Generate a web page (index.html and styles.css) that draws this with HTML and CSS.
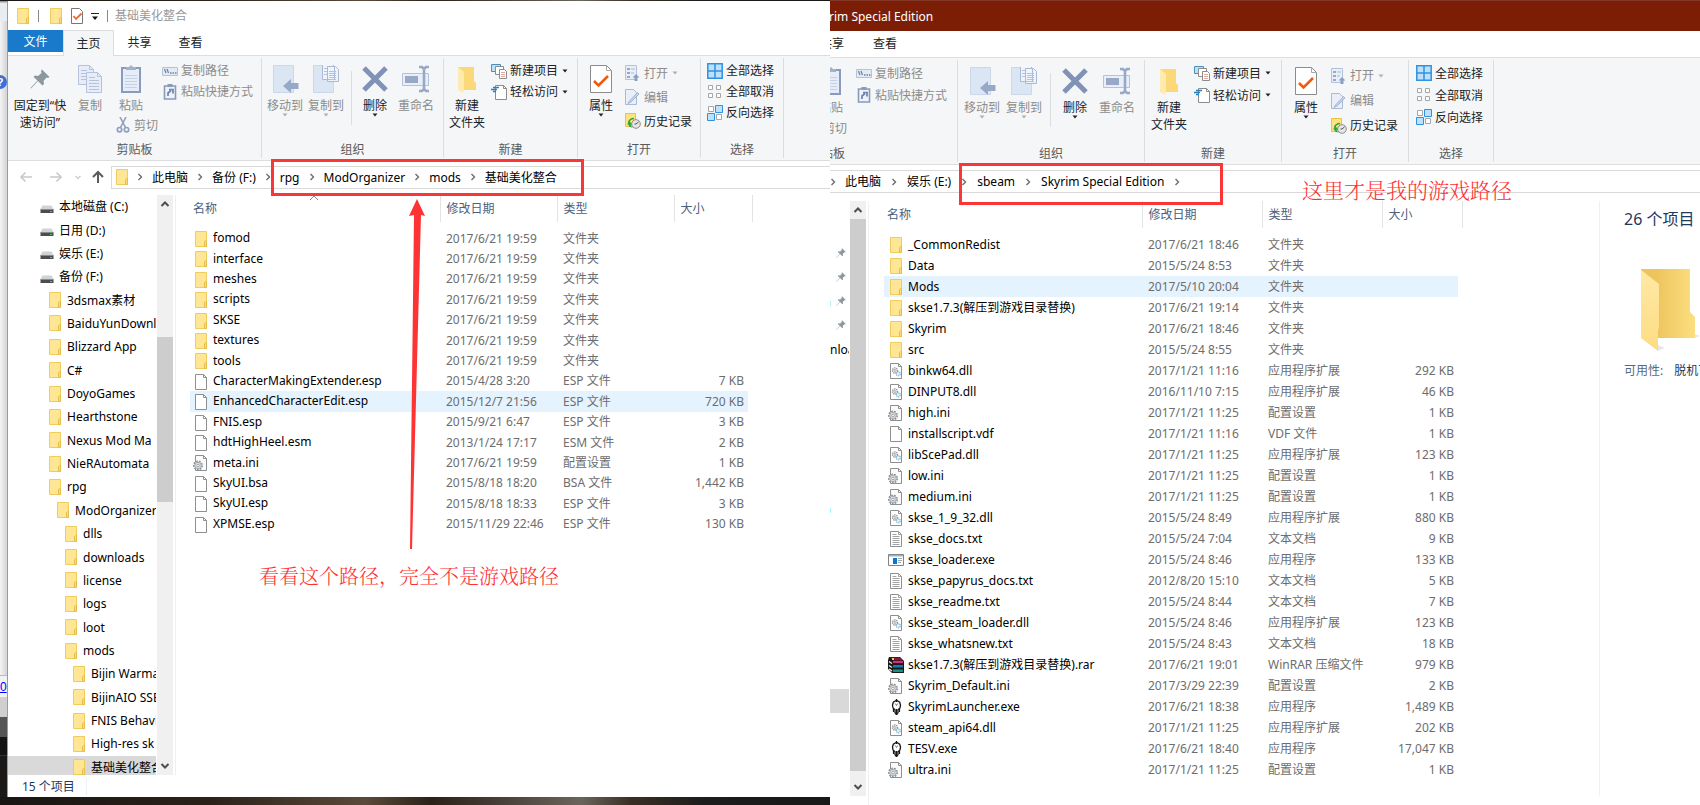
FILE: index.html
```html
<!DOCTYPE html>
<html lang="zh-CN">
<head>
<meta charset="utf-8">
<title>基础美化整合</title>
<link rel="stylesheet" href="styles.css">
</head>
<body>
<svg class="sprite" aria-hidden="true">
  <symbol id="folder" viewBox="0 0 16 16"><path d="M2.5.5h11v15h-11z" fill="#ffe694" stroke="#f0cc5c"/><path d="M11.5 15.5v-5l1-1h1v6z" fill="#ffdc72" stroke="#e6bd48"/></symbol>
  <symbol id="file" viewBox="0 0 16 16"><path d="M2.500.5h8l3 3v12h-11z" fill="#fff" stroke="#8f8f8f"/><path d="M10.500.5v3h3" fill="none" stroke="#8f8f8f"/></symbol>
  <symbol id="gearfile" viewBox="0 0 16 16"><path d="M2.500.5h8l3 3v12h-11z" fill="#fafafa" stroke="#8f8f8f"/><path d="M10.500.5v3h3" fill="none" stroke="#8f8f8f"/><circle cx="5" cy="10.500" r="4.200" fill="#e4e7ea" stroke="#8b9095" stroke-width="1.600" stroke-dasharray="1.700 1.200"/><circle cx="5" cy="10.500" r="3.200" fill="#dde1e4" stroke="#9aa0a5" stroke-width=".8"/><circle cx="5" cy="10.500" r="1.300" fill="#fff" stroke="#8b9095" stroke-width=".8"/></symbol>
  <symbol id="dll" viewBox="0 0 16 16"><path d="M2.500.5h8l3 3v12h-11z" fill="#fff" stroke="#8f8f8f"/><path d="M10.500.5v3h3" fill="none" stroke="#8f8f8f"/><circle cx="7" cy="7.500" r="2.600" fill="#eef1f3" stroke="#8b9095" stroke-width="1.200" stroke-dasharray="1.400 .8"/><circle cx="7" cy="7.500" r="1" fill="#fff" stroke="#8b9095" stroke-width=".7"/><circle cx="10.300" cy="10.800" r="2" fill="#e5f2f9" stroke="#7fb2cf" stroke-width="1.200" stroke-dasharray="1.200 .7"/></symbol>
  <symbol id="txt" viewBox="0 0 16 16"><path d="M2.500.5h8l3 3v12h-11z" fill="#fff" stroke="#8f8f8f"/><path d="M10.500.5v3h3M4.500 3.500h4M4.500 5.500h7M4.500 7.500h7M4.500 9.500h7M4.500 11.500h7M4.500 13.500h7" fill="none" stroke="#a2a2a2"/></symbol>
  <symbol id="exe" viewBox="0 0 16 16"><path d="M.5 2.500h15v11h-15z" fill="#fff" stroke="#7d858c"/><path d="M1 3h14v1.500H1z" fill="#a9b0b6"/><path d="M5 6h4v6H5z" fill="#0078d7"/><path d="M10 6.500h4M10 8.500h4M10 10.500h3" stroke="#a2a8ad"/></symbol>
  <symbol id="rar" viewBox="0 0 16 16"><path d="M1 0h11l4 4v12H4L0 12V3z" fill="#1a1a1a"/><path d="M2 .5h10l3 3H5z" fill="#8a1540"/><path d="M5 4h10v2H5z" fill="#d0307a"/><path d="M5 8h10v2.500H5z" fill="#1f72c0"/><path d="M5 12.500h10V15H5z" fill="#12967a"/><path d="M1 4.500l3 2M1 8.500l3 2M1 12l3 2" stroke="#eee" stroke-width="1.200"/><path d="M4 1h2v2H4z" fill="#f0c73e"/></symbol>
  <symbol id="emblem" viewBox="0 0 16 16"><path d="M8.500 1.200L5.300 3.200 4.500 6l.5 3L7 10.800v3l1.500 1.700L10 13.800v-3L12 9l.5-3-.8-2.800z" fill="#fff" stroke="#161616" stroke-width="1.300"/><path d="M7.300 4.500l1.200 2 1.200-2" fill="none" stroke="#444" stroke-width=".7"/><path d="M8.500 0v3M8.500 10v6" stroke="#161616" stroke-width="1.300"/><path d="M5.500 10v3M11.500 10v3" stroke="#161616" stroke-width="1.200"/></symbol>
  <symbol id="drive" viewBox="0 0 16 16"><path d="M3.500 6.500h9l2 3.500h-13z" fill="#d0d3d5"/><path d="M1.500 10h13v4h-13z" fill="#4a4d4f"/><path d="M2 10.500h12" stroke="#898c8e"/><path d="M11 12h2v1h-2z" fill="#3bd44a"/></symbol>
  <symbol id="chev" viewBox="0 0 6 8"><path d="M1.500 1l3 3-3 3" fill="none" stroke="#6d6d6d" stroke-width="1.400"/></symbol>
  <symbol id="caret" viewBox="0 0 6 4"><path d="M.500.5h5L3 3.500z" fill="currentColor"/></symbol>
  <symbol id="up" viewBox="0 0 10 6"><path d="M1.500 5L5 1.500 8.500 5" fill="none" stroke="#4e4e4e" stroke-width="2"/></symbol>
  <symbol id="down" viewBox="0 0 10 6"><path d="M1.500 1L5 4.500 8.500 1" fill="none" stroke="#4e4e4e" stroke-width="2"/></symbol>
  <symbol id="pin" viewBox="0 0 20 20"><path d="M12 .5L19.500 8l-1.500 1-1.500-.5-3 3.500.5 3-1.500 1.500-4.500-4.500L1 19.500.5 19l7-7.500L3.500 8 5 6.500l3 .5 3.500-3L11 2z" fill="#8c979e"/></symbol>
  <symbol id="copy" viewBox="0 0 28 28"><g fill="#e6edf8" stroke="#b4c2dc"><path d="M2.500.5h11l4 4v15h-15z"/><path d="M10.500 7.500h11l4 4v16h-15z"/></g><path d="M13.500.5v4h4M21.500 7.500v4h4M5 5.500h6M5 8.500h5M5 11.500h5M5 14.500h5M13 12.500h6M13 15.500h10M13 18.500h10M13 21.500h10M13 24.500h10" fill="none" stroke="#b4c2dc"/></symbol>
  <symbol id="paste" viewBox="0 0 28 28"><path d="M5 3h18v24H5z" fill="#e6edf8" stroke="#889bbd" stroke-width="2"/><path d="M9 5V2h3l2-2 2 2h3v3z" fill="#a3b2cc"/><path d="M8 10.500h12M8 13.500h12M8 16.500h12M8 19.500h12M8 22.500h12" stroke="#c5d1e5"/></symbol>
  <symbol id="cut" viewBox="0 0 16 16"><path d="M5 0l5.500 10.500M11 0L5.500 10.500" stroke="#8f9fbd" stroke-width="1.600"/><g fill="none" stroke="#8f9fbd" stroke-width="1.700"><circle cx="4.500" cy="12.700" r="2.200"/><circle cx="11.500" cy="12.700" r="2.200"/></g></symbol>
  <symbol id="path" viewBox="0 0 16 16"><path d="M.5 4.500h15v8H.5z" fill="#e2eaf6" stroke="#b4c2dc"/><path d="M2.500 6l1.500 4M5 6l1.500 4" stroke="#6e7f9f" stroke-width="1.200"/><path d="M8 10h1.500M10.500 10H12M13 10h1.500" stroke="#6e7f9f" stroke-width="1.500"/></symbol>
  <symbol id="shortcut" viewBox="0 0 16 16"><path d="M2.500 2h11v13h-11z" fill="#eef3fa" stroke="#889bbd" stroke-width="1.600"/><path d="M5.500 0h5v3h-5z" fill="#889bbd"/><path d="M6 12V9l3-2.500M7 5.500h4v4" fill="none" stroke="#6e83aa" stroke-width="1.700"/></symbol>
  <symbol id="move" viewBox="0 0 28 28"><path d="M2.500.5h20v27h-20z" fill="#dbe6f5" stroke="#cbd8ec"/><path d="M27.500 18v6H20v4l-8-7 8-7v4z" fill="#98a9c8"/></symbol>
  <symbol id="copyto" viewBox="0 0 28 28"><path d="M1.500.5h20v27h-20z" fill="#dbe6f5" stroke="#cbd8ec"/><path d="M10.500-1.500h9l3 3v13h-12zM15.500 1.500h8l3 3v12h-11z" fill="#eff4fb" stroke="#a9b9d6"/><path d="M17 6.500h7M17 8.500h7M17 10.500h7M17 12.500h7M17 14.500h7M12 3.500h3M12 6.500h3M12 9.500h3" stroke="#b4c2dc"/></symbol>
  <symbol id="delete" viewBox="0 0 28 28"><path d="M3 3l22 22M25 3L3 25" stroke="#8093b6" stroke-width="5"/></symbol>
  <symbol id="rename" viewBox="0 0 28 28"><path d="M.5 8.500h26v12H.5z" fill="#e8eff8" stroke="#b4c2dc"/><path d="M3 11h13v7H3z" fill="#98a9c8"/><path d="M22 3v22M17 2h3l2 2 2-2h3M17 26h3l2-2 2 2h3" fill="none" stroke="#98a9c8" stroke-width="2.600"/></symbol>
  <symbol id="newfolder" viewBox="0 0 28 28"><path d="M5 2h16v14l2 2v7H5z" fill="#fbd978"/><path d="M5 2l6 5v16l-1 5-5-3z" fill="#ffebaf"/></symbol>
  <symbol id="newitem" viewBox="0 0 16 16"><path d="M.5 1.500h9v7h-9z" fill="#bfe0f4" stroke="#4b8fba"/><path d="M4.500 3.500h8v8h-8z" fill="#fff" stroke="#8c8c8c"/><path d="M8.500 6.500h5l2 2v7h-7z" fill="#fff" stroke="#8c8c8c"/><path d="M10 9.500h4M10 11.500h4M10 13.500h4" stroke="#e0a9a0"/></symbol>
  <symbol id="easy" viewBox="0 0 16 16"><path d="M4.500 1.500h8l3 3v11h-11z" fill="#fff" stroke="#8c8c8c"/><path d="M12.500 1.500v3h3" fill="none" stroke="#8c8c8c"/><path d="M2 3.500h6M0 5.500h6M2 7.500h3" stroke="#2f7fb8" stroke-width="1.500"/></symbol>
  <symbol id="props" viewBox="0 0 28 28"><path d="M3.500.5h16l5 5v22h-21z" fill="#fff" stroke="#8c8c8c"/><path d="M19.500.5v5h5" fill="none" stroke="#a8a8a8"/><path d="M7 16l4.500 4.500L21 11" fill="none" stroke="#f2590d" stroke-width="2.600"/></symbol>
  <symbol id="tick" viewBox="0 0 16 16"><path d="M2.500.5h8l3 3v12h-11z" fill="#fff" stroke="#777"/><path d="M4.500 8l2.500 3 5.500-5.500" fill="none" stroke="#f2692a" stroke-width="1.800"/></symbol>
  <symbol id="open" viewBox="0 0 16 16"><path d="M.5.500h11v14H.5z" fill="#e8eff8" stroke="#b4c2dc"/><path d="M2 3h3v2H2zM2 7h3v2H2zM2 11h3v2H2z" fill="#98a9c8"/><path d="M6 4h4M6 8h3" stroke="#a9b9d6"/><path d="M9.500 16v-3.500H7.500L11 9l3.500 3.500h-2V16z" fill="#8c9fc3"/></symbol>
  <symbol id="edit" viewBox="0 0 16 16"><path d="M.5.500h8l3 3v12H.5z" fill="#e8eff8" stroke="#a9b9d6"/><path d="M14 5L6 13l-3 1.500L4.500 12 12.500 3.500z" fill="#c6d4ea" stroke="#98a9c8" stroke-width=".8"/></symbol>
  <symbol id="history" viewBox="0 0 16 16"><path d="M.5.500h10v13H.5z" fill="#ffe37e" stroke="#e9c14d"/><circle cx="11" cy="11" r="4.300" fill="#e6e6e6" stroke="#8c8c8c"/><path d="M11 11l2.500-2M11 11H9.500" stroke="#555"/><path d="M2 11.500L4.500 8 7 11.500H5.700c0 1.500 1 2.500 2.300 3-3 0-4.500-1-4.500-3z" fill="#24a63a"/><path d="M3.500 9.500C4.500 6.500 6.500 5.500 9 5.500" fill="none" stroke="#24a63a" stroke-width="1.600"/></symbol>
  <symbol id="selall" viewBox="0 0 16 16"><path d="M.8.800h14.400v14.400H.8zM8 1v14M1 8h14" fill="#bfe0fa" stroke="#2f92e0" stroke-width="1.500"/></symbol>
  <symbol id="selnone" viewBox="0 0 16 16"><path d="M1.500 1.500h4v4h-4zM9.500 1.500h4v4h-4zM1.500 9.500h4v4h-4zM9.500 9.500h4v4h-4z" fill="#fff" stroke="#a6a6a6"/></symbol>
  <symbol id="selinv" viewBox="0 0 16 16"><path d="M1.500 1.500h5v5h-5zM9.500 9.500h5v5h-5z" fill="#fff" stroke="#a6a6a6"/><path d="M8.500.5h7v7h-7zM.5 8.500h7v7h-7z" fill="#bfe0fa" stroke="#2f92e0"/></symbol>
</svg>

<main class="desktop">
  <section class="scene scene-left">
    <div class="backdrop">
      <i class="strip strip-top"></i>
      <i class="strip strip-page"><b class="help">?</b></i>
      <i class="strip strip-link"><a href="#">0</a></i>
      <i class="strip strip-gray"></i>
      <i class="strip strip-slate"></i>
      <i class="strip strip-dark"></i>
    </div>

    <div class="window window-left">
      <header class="titlebar">
        <svg class="i16"><use href="#folder"/></svg><span class="tick-sep"></span>
        <svg class="i16 quick-folder"><use href="#folder"/></svg>
        <svg class="i16"><use href="#tick"/></svg>
        <svg class="qat" viewBox="0 0 8 8"><path d="M0 .5h8" stroke="#222"/><path d="M1 3.500h6L4 7z" fill="#111"/></svg>
        <span class="tick-sep"></span>
        <span class="title">基础美化整合</span>
      </header>
      <nav class="tabs">
        <button class="tab tab-file">文件</button>
        <button class="tab tab-on">主页</button>
        <button class="tab">共享</button>
        <button class="tab">查看</button>
      </nav>
      <div class="ribbon">
        <section class="group g-clip">
          <div class="tools">
            <button class="big big-pin"><svg class="i28 pin-icon"><use href="#pin"/></svg>固定到“快<br>速访问”</button>
            <button class="big off"><svg class="i28"><use href="#copy"/></svg>复制</button>
            <div class="paste-col">
              <button class="big off"><svg class="i28"><use href="#paste"/></svg>粘贴</button>
              <button class="small off cut"><svg class="i16"><use href="#cut"/></svg>剪切</button>
            </div>
            <div class="stack">
              <button class="small off"><svg class="i16"><use href="#path"/></svg>复制路径</button>
              <button class="small off"><svg class="i16"><use href="#shortcut"/></svg>粘贴快捷方式</button>
            </div>
          </div>
          <h2>剪贴板</h2>
        </section>
        <section class="group g-org">
          <div class="tools">
            <button class="big off"><svg class="i28"><use href="#move"/></svg>移动到<svg class="caret"><use href="#caret"/></svg></button>
            <button class="big off"><svg class="i28"><use href="#copyto"/></svg>复制到<svg class="caret"><use href="#caret"/></svg></button>
            <span class="rule"></span>
            <button class="big"><svg class="i28"><use href="#delete"/></svg>删除<svg class="caret"><use href="#caret"/></svg></button>
            <button class="big off"><svg class="i28"><use href="#rename"/></svg>重命名</button>
          </div>
          <h2>组织</h2>
        </section>
        <section class="group g-new">
          <div class="tools">
            <button class="big"><svg class="i28"><use href="#newfolder"/></svg>新建<br>文件夹</button>
            <div class="stack">
              <button class="small"><svg class="i16"><use href="#newitem"/></svg>新建项目<svg class="caret"><use href="#caret"/></svg></button>
              <button class="small"><svg class="i16"><use href="#easy"/></svg>轻松访问<svg class="caret"><use href="#caret"/></svg></button>
            </div>
          </div>
          <h2>新建</h2>
        </section>
        <section class="group g-open">
          <div class="tools">
            <button class="big"><svg class="i28"><use href="#props"/></svg>属性<svg class="caret"><use href="#caret"/></svg></button>
            <div class="stack stack-loose">
              <button class="small off"><svg class="i16"><use href="#open"/></svg>打开<svg class="caret"><use href="#caret"/></svg></button>
              <button class="small off"><svg class="i16"><use href="#edit"/></svg>编辑</button>
              <button class="small"><svg class="i16"><use href="#history"/></svg>历史记录</button>
            </div>
          </div>
          <h2>打开</h2>
        </section>
        <section class="group g-select">
          <div class="tools">
            <div class="stack">
              <button class="small"><svg class="i16"><use href="#selall"/></svg>全部选择</button>
              <button class="small"><svg class="i16"><use href="#selnone"/></svg>全部取消</button>
              <button class="small"><svg class="i16"><use href="#selinv"/></svg>反向选择</button>
            </div>
          </div>
          <h2>选择</h2>
        </section>
      </div>
      <div class="address">
        <svg class="nav-arrows" viewBox="0 0 100 16"><g fill="none" stroke-width="1.600"><path d="M24 8H13M17.500 3.500L13 8l4.500 4.500M42 8h11M48.500 3.500L53 8l-4.500 4.500" stroke="#c9c9c9"/><path d="M67.500 7l2.500 2.500L72.500 7" stroke="#c9c9c9" stroke-width="1.200"/><path d="M90 14V3M85 8l5-5 5 5" stroke="#5b5b5b" stroke-width="2"/></g></svg>
        <nav class="crumbs">
          <svg class="i16"><use href="#folder"/></svg>
          <svg class="chev"><use href="#chev"/></svg><a href="#">此电脑</a>
          <svg class="chev"><use href="#chev"/></svg><a href="#">备份 (F:)</a>
          <svg class="chev"><use href="#chev"/></svg><a href="#">rpg</a>
          <svg class="chev"><use href="#chev"/></svg><a href="#">ModOrganizer</a>
          <svg class="chev"><use href="#chev"/></svg><a href="#">mods</a>
          <svg class="chev"><use href="#chev"/></svg><a href="#">基础美化整合</a>
        </nav>
      </div>
      <div class="content">
        <div class="treebox">
          <ul class="tree">
            <li><svg class="i16"><use href="#drive"/></svg>本地磁盘 (C:)</li>
            <li><svg class="i16"><use href="#drive"/></svg>日用 (D:)</li>
            <li><svg class="i16"><use href="#drive"/></svg>娱乐 (E:)</li>
            <li><svg class="i16"><use href="#drive"/></svg>备份 (F:)</li>
            <li class="l1"><svg class="i16"><use href="#folder"/></svg>3dsmax素材</li>
            <li class="l1"><svg class="i16"><use href="#folder"/></svg>BaiduYunDownload</li>
            <li class="l1"><svg class="i16"><use href="#folder"/></svg>Blizzard App</li>
            <li class="l1"><svg class="i16"><use href="#folder"/></svg>C#</li>
            <li class="l1"><svg class="i16"><use href="#folder"/></svg>DoyoGames</li>
            <li class="l1"><svg class="i16"><use href="#folder"/></svg>Hearthstone</li>
            <li class="l1"><svg class="i16"><use href="#folder"/></svg>Nexus Mod Ma</li>
            <li class="l1"><svg class="i16"><use href="#folder"/></svg>NieRAutomata</li>
            <li class="l1"><svg class="i16"><use href="#folder"/></svg>rpg</li>
            <li class="l2"><svg class="i16"><use href="#folder"/></svg>ModOrganizer</li>
            <li class="l3"><svg class="i16"><use href="#folder"/></svg>dlls</li>
            <li class="l3"><svg class="i16"><use href="#folder"/></svg>downloads</li>
            <li class="l3"><svg class="i16"><use href="#folder"/></svg>license</li>
            <li class="l3"><svg class="i16"><use href="#folder"/></svg>logs</li>
            <li class="l3"><svg class="i16"><use href="#folder"/></svg>loot</li>
            <li class="l3"><svg class="i16"><use href="#folder"/></svg>mods</li>
            <li class="l4"><svg class="i16"><use href="#folder"/></svg>Bijin Warma</li>
            <li class="l4"><svg class="i16"><use href="#folder"/></svg>BijinAIO SSE</li>
            <li class="l4"><svg class="i16"><use href="#folder"/></svg>FNIS Behavi</li>
            <li class="l4"><svg class="i16"><use href="#folder"/></svg>High-res sk</li>
            <li class="l4 on"><svg class="i16"><use href="#folder"/></svg>基础美化整合</li>
          </ul>
        </div>
        <div class="scroll scroll-left"><svg class="arrow"><use href="#up"/></svg><i class="gap-before"></i><i class="thumb"></i><i class="gap-after"></i><svg class="arrow"><use href="#down"/></svg></div>
        <div class="listing">
          <table class="files">
            <colgroup><col class="c-name"><col class="c-date"><col class="c-type"><col class="c-size"></colgroup>
            <thead><tr><th>名称</th><th>修改日期</th><th>类型</th><th>大小</th></tr></thead>
            <tbody>
              <tr><td><svg class="i16"><use href="#folder"/></svg>fomod</td><td>2017/6/21 19:59</td><td>文件夹</td><td></td></tr>
              <tr><td><svg class="i16"><use href="#folder"/></svg>interface</td><td>2017/6/21 19:59</td><td>文件夹</td><td></td></tr>
              <tr><td><svg class="i16"><use href="#folder"/></svg>meshes</td><td>2017/6/21 19:59</td><td>文件夹</td><td></td></tr>
              <tr><td><svg class="i16"><use href="#folder"/></svg>scripts</td><td>2017/6/21 19:59</td><td>文件夹</td><td></td></tr>
              <tr><td><svg class="i16"><use href="#folder"/></svg>SKSE</td><td>2017/6/21 19:59</td><td>文件夹</td><td></td></tr>
              <tr><td><svg class="i16"><use href="#folder"/></svg>textures</td><td>2017/6/21 19:59</td><td>文件夹</td><td></td></tr>
              <tr><td><svg class="i16"><use href="#folder"/></svg>tools</td><td>2017/6/21 19:59</td><td>文件夹</td><td></td></tr>
              <tr><td><svg class="i16"><use href="#file"/></svg>CharacterMakingExtender.esp</td><td>2015/4/28 3:20</td><td>ESP 文件</td><td>7 KB</td></tr>
              <tr class="on"><td><svg class="i16"><use href="#file"/></svg>EnhancedCharacterEdit.esp</td><td>2015/12/7 21:56</td><td>ESP 文件</td><td>720 KB</td></tr>
              <tr><td><svg class="i16"><use href="#file"/></svg>FNIS.esp</td><td>2015/9/21 6:47</td><td>ESP 文件</td><td>3 KB</td></tr>
              <tr><td><svg class="i16"><use href="#file"/></svg>hdtHighHeel.esm</td><td>2013/1/24 17:17</td><td>ESM 文件</td><td>2 KB</td></tr>
              <tr><td><svg class="i16"><use href="#gearfile"/></svg>meta.ini</td><td>2017/6/21 19:59</td><td>配置设置</td><td>1 KB</td></tr>
              <tr><td><svg class="i16"><use href="#file"/></svg>SkyUI.bsa</td><td>2015/8/18 18:20</td><td>BSA 文件</td><td>1,442 KB</td></tr>
              <tr><td><svg class="i16"><use href="#file"/></svg>SkyUI.esp</td><td>2015/8/18 18:33</td><td>ESP 文件</td><td>3 KB</td></tr>
              <tr><td><svg class="i16"><use href="#file"/></svg>XPMSE.esp</td><td>2015/11/29 22:46</td><td>ESP 文件</td><td>130 KB</td></tr>
            </tbody>
          </table>
        </div>
      </div>
      <footer class="status"><span>15 个项目</span></footer>
      <div class="mark-box mark-left"></div>
      <svg class="mark-sort sort-left" viewBox="0 0 10 6"><path d="M1 5l4-4 4 4" fill="none" stroke="#8a8a8a"/></svg>
      <svg class="mark-arrow" viewBox="0 0 20 352"><path d="M11 0l8 17-4-1L6 350H4L8 16l-5 1z" fill="#fe3333"/></svg>
      <p class="note note-left">看看这个路径，完全不是游戏路径</p>
    </div>
  </section>

  <section class="scene window window-right">
    <header class="titlebar"><span class="title">rim Special Edition</span></header>
    <nav class="tabs">
      <button class="tab tab-cropped">共享</button>
      <button class="tab">查看</button>
    </nav>
    <div class="ribbon">
      <section class="group g-clip">
        <div class="tools">
          <div class="paste-col">
            <button class="big off"><svg class="i28"><use href="#paste"/></svg>粘贴</button>
            <button class="small off cut">剪切</button>
          </div>
          <div class="stack">
            <button class="small off"><svg class="i16"><use href="#path"/></svg>复制路径</button>
            <button class="small off"><svg class="i16"><use href="#shortcut"/></svg>粘贴快捷方式</button>
          </div>
        </div>
        <h2>剪贴板</h2>
      </section>
      <section class="group g-org">
        <div class="tools">
          <button class="big off"><svg class="i28"><use href="#move"/></svg>移动到<svg class="caret"><use href="#caret"/></svg></button>
          <button class="big off"><svg class="i28"><use href="#copyto"/></svg>复制到<svg class="caret"><use href="#caret"/></svg></button>
          <span class="rule"></span>
          <button class="big"><svg class="i28"><use href="#delete"/></svg>删除<svg class="caret"><use href="#caret"/></svg></button>
          <button class="big off"><svg class="i28"><use href="#rename"/></svg>重命名</button>
        </div>
        <h2>组织</h2>
      </section>
      <section class="group g-new">
        <div class="tools">
          <button class="big"><svg class="i28"><use href="#newfolder"/></svg>新建<br>文件夹</button>
          <div class="stack">
            <button class="small"><svg class="i16"><use href="#newitem"/></svg>新建项目<svg class="caret"><use href="#caret"/></svg></button>
            <button class="small"><svg class="i16"><use href="#easy"/></svg>轻松访问<svg class="caret"><use href="#caret"/></svg></button>
          </div>
        </div>
        <h2>新建</h2>
      </section>
      <section class="group g-open">
        <div class="tools">
          <button class="big"><svg class="i28"><use href="#props"/></svg>属性<svg class="caret"><use href="#caret"/></svg></button>
          <div class="stack stack-loose">
            <button class="small off"><svg class="i16"><use href="#open"/></svg>打开<svg class="caret"><use href="#caret"/></svg></button>
            <button class="small off"><svg class="i16"><use href="#edit"/></svg>编辑</button>
            <button class="small"><svg class="i16"><use href="#history"/></svg>历史记录</button>
          </div>
        </div>
        <h2>打开</h2>
      </section>
      <section class="group g-select">
        <div class="tools">
          <div class="stack">
            <button class="small"><svg class="i16"><use href="#selall"/></svg>全部选择</button>
            <button class="small"><svg class="i16"><use href="#selnone"/></svg>全部取消</button>
            <button class="small"><svg class="i16"><use href="#selinv"/></svg>反向选择</button>
          </div>
        </div>
        <h2>选择</h2>
      </section>
    </div>
    <div class="address">
      <nav class="crumbs">
        <svg class="chev"><use href="#chev"/></svg><a href="#">此电脑</a>
        <svg class="chev"><use href="#chev"/></svg><a href="#">娱乐 (E:)</a>
        <svg class="chev"><use href="#chev"/></svg><a href="#">sbeam</a>
        <svg class="chev"><use href="#chev"/></svg><a href="#">Skyrim Special Edition</a>
        <svg class="chev"><use href="#chev"/></svg>
      </nav>
    </div>
    <div class="content">
      <ul class="quick">
        <li><svg class="pin"><use href="#pin"/></svg></li>
        <li><svg class="pin"><use href="#pin"/></svg></li>
        <li><svg class="pin"><use href="#pin"/></svg></li>
        <li><svg class="pin"><use href="#pin"/></svg></li>
        <li class="quick-text">nload</li>
        <li class="quick-on"></li>
      </ul>
      <div class="scroll scroll-right"><svg class="arrow"><use href="#up"/></svg><i class="thumb"></i><i class="gap-after"></i><svg class="arrow"><use href="#down"/></svg></div>
      <div class="listing">
        <table class="files">
          <colgroup><col class="c-name"><col class="c-date"><col class="c-type"><col class="c-size"></colgroup>
          <thead><tr><th>名称</th><th>修改日期</th><th>类型</th><th>大小</th></tr></thead>
          <tbody>
            <tr><td><svg class="i16"><use href="#folder"/></svg>_CommonRedist</td><td>2017/6/21 18:46</td><td>文件夹</td><td></td></tr>
            <tr><td><svg class="i16"><use href="#folder"/></svg>Data</td><td>2015/5/24 8:53</td><td>文件夹</td><td></td></tr>
            <tr class="on"><td><svg class="i16"><use href="#folder"/></svg>Mods</td><td>2017/5/10 20:04</td><td>文件夹</td><td></td></tr>
            <tr><td><svg class="i16"><use href="#folder"/></svg>skse1.7.3(解压到游戏目录替换)</td><td>2017/6/21 19:14</td><td>文件夹</td><td></td></tr>
            <tr><td><svg class="i16"><use href="#folder"/></svg>Skyrim</td><td>2017/6/21 18:46</td><td>文件夹</td><td></td></tr>
            <tr><td><svg class="i16"><use href="#folder"/></svg>src</td><td>2015/5/24 8:55</td><td>文件夹</td><td></td></tr>
            <tr><td><svg class="i16"><use href="#dll"/></svg>binkw64.dll</td><td>2017/1/21 11:16</td><td>应用程序扩展</td><td>292 KB</td></tr>
            <tr><td><svg class="i16"><use href="#dll"/></svg>DINPUT8.dll</td><td>2016/11/10 7:15</td><td>应用程序扩展</td><td>46 KB</td></tr>
            <tr><td><svg class="i16"><use href="#gearfile"/></svg>high.ini</td><td>2017/1/21 11:25</td><td>配置设置</td><td>1 KB</td></tr>
            <tr><td><svg class="i16"><use href="#file"/></svg>installscript.vdf</td><td>2017/1/21 11:16</td><td>VDF 文件</td><td>1 KB</td></tr>
            <tr><td><svg class="i16"><use href="#dll"/></svg>libScePad.dll</td><td>2017/1/21 11:25</td><td>应用程序扩展</td><td>123 KB</td></tr>
            <tr><td><svg class="i16"><use href="#gearfile"/></svg>low.ini</td><td>2017/1/21 11:25</td><td>配置设置</td><td>1 KB</td></tr>
            <tr><td><svg class="i16"><use href="#gearfile"/></svg>medium.ini</td><td>2017/1/21 11:25</td><td>配置设置</td><td>1 KB</td></tr>
            <tr><td><svg class="i16"><use href="#dll"/></svg>skse_1_9_32.dll</td><td>2015/5/24 8:49</td><td>应用程序扩展</td><td>880 KB</td></tr>
            <tr><td><svg class="i16"><use href="#txt"/></svg>skse_docs.txt</td><td>2015/5/24 7:04</td><td>文本文档</td><td>9 KB</td></tr>
            <tr><td><svg class="i16"><use href="#exe"/></svg>skse_loader.exe</td><td>2015/5/24 8:46</td><td>应用程序</td><td>133 KB</td></tr>
            <tr><td><svg class="i16"><use href="#txt"/></svg>skse_papyrus_docs.txt</td><td>2012/8/20 15:10</td><td>文本文档</td><td>5 KB</td></tr>
            <tr><td><svg class="i16"><use href="#txt"/></svg>skse_readme.txt</td><td>2015/5/24 8:44</td><td>文本文档</td><td>7 KB</td></tr>
            <tr><td><svg class="i16"><use href="#dll"/></svg>skse_steam_loader.dll</td><td>2015/5/24 8:46</td><td>应用程序扩展</td><td>123 KB</td></tr>
            <tr><td><svg class="i16"><use href="#txt"/></svg>skse_whatsnew.txt</td><td>2015/5/24 8:43</td><td>文本文档</td><td>18 KB</td></tr>
            <tr><td><svg class="i16"><use href="#rar"/></svg>skse1.7.3(解压到游戏目录替换).rar</td><td>2017/6/21 19:01</td><td>WinRAR 压缩文件</td><td>979 KB</td></tr>
            <tr><td><svg class="i16"><use href="#gearfile"/></svg>Skyrim_Default.ini</td><td>2017/3/29 22:39</td><td>配置设置</td><td>2 KB</td></tr>
            <tr><td><svg class="i16"><use href="#emblem"/></svg>SkyrimLauncher.exe</td><td>2017/6/21 18:38</td><td>应用程序</td><td>1,489 KB</td></tr>
            <tr><td><svg class="i16"><use href="#dll"/></svg>steam_api64.dll</td><td>2017/1/21 11:25</td><td>应用程序扩展</td><td>202 KB</td></tr>
            <tr><td><svg class="i16"><use href="#emblem"/></svg>TESV.exe</td><td>2017/6/21 18:40</td><td>应用程序</td><td>17,047 KB</td></tr>
            <tr><td><svg class="i16"><use href="#gearfile"/></svg>ultra.ini</td><td>2017/1/21 11:25</td><td>配置设置</td><td>1 KB</td></tr>
          </tbody>
        </table>
      </div>
      <aside class="details">
        <h1>26 个项目</h1>
        <svg class="bigfolder" viewBox="0 0 60 84"><defs><linearGradient id="bf" x1="0" x2="1"><stop offset="0.300" stop-color="#edc55f"/><stop offset="1" stop-color="#fddf80"/></linearGradient><linearGradient id="ff" x1="0" y1="0" x2="0" y2="1"><stop offset="0" stop-color="#ffe9a4"/><stop offset="1" stop-color="#fddc83"/></linearGradient></defs><path d="M17 82l8-3-7-3zM54 69l6-2-6-2z" fill="#e6e6e6"/><path d="M1 0h49v43l5 5v21H1z" fill="url(#bf)"/><path d="M1 1l18 14v43l-1 4v20L1 69z" fill="url(#ff)"/></svg>
        <p><span class="dim">可用性:</span><span>脱机可用</span></p>
      </aside>
    </div>
    <div class="mark-box mark-right"></div>
    <p class="note note-right">这里才是我的游戏路径</p>
  </section>
</main>
</body>
</html>
```
FILE: styles.css
```css
* { box-sizing: border-box; }
body {
  margin: 0;
  font: 12px/17px "Noto Sans", "Noto Sans CJK SC", sans-serif;
  color: #000;
  background: #fff;
}
ul, h1, h2, p { margin: 0; padding: 0; list-style: none; font-weight: 400; }
button { margin: 0; padding: 0; border: 0; background: none; font: inherit; color: #222; }
a { color: inherit; text-decoration: none; }
svg { flex: none; display: block; }
.sprite { position: absolute; width: 0; height: 0; }
.i16 { width: 16px; height: 16px; }
.i28 { width: 28px; height: 28px; }

.desktop { display: flex; min-height: 100vh; overflow: hidden; }
.scene { min-width: 0; min-height: 100vh; }
.scene-left {
  flex: 830 1 0;
  display: flex;
  padding: 1px 0 8px;
  background: linear-gradient(90deg, #181614, #2b2119 25%, #5a4a3a 44%, #2b2119 52%, #6a655c 70%, #3a2f25 76%, #1c1c1c 85%, #181818);
}

/* Sliver of the windows behind */
.backdrop { flex: none; width: 8px; display: flex; flex-direction: column; overflow: hidden; border-right: 1px solid #9a9a9a; }
.strip { display: block; flex: none; }
.strip-top { height: 20px; background: linear-gradient(#9a9a9a 1px, #e9edf2 2px); }
.strip-page { flex: 1; background: linear-gradient(90deg, #f4f4f5, #d4d4d6); }
.help { display: block; width: 14px; height: 14px; margin: 54px 0 0 -7px; border-radius: 7px; background: #3d6fd6; color: #fff; font: bold 11px/14px "Liberation Sans", sans-serif; text-align: center; }
.strip-link { height: 22px; background: #f2f2f2; border-top: 1px solid #bbb; color: #00f; font: 12px/22px "Liberation Sans", sans-serif; }
.strip-link a { text-decoration: underline; }
.strip-gray { height: 20px; background: #cfcfcf; }
.strip-slate { height: 20px; background: #555; }
.strip-dark { height: 60px; background: linear-gradient(#141414 18px, #a00 18px, #a00 19px, #1b1918 19px); }

/* Window frame */
.window { position: relative; display: flex; flex-direction: column; overflow: hidden; background: #fff; }
.window-left { flex: 1; min-width: 0; }
.window-right { flex: 870 1 0; }

.titlebar { display: flex; align-items: center; flex: none; height: 29px; }
.window-left .titlebar { padding-left: 7px; color: #999; }
.tick-sep { width: 1px; height: 12px; margin: 0 7px; background: #888; }
.titlebar .i16 + .i16 { margin-left: 5px; }
.titlebar .quick-folder { margin-left: 2px; }
.qat { width: 8px; height: 8px; margin: 2px 1px 0 6px; }
.window-right .titlebar { height: 31px; background: #7c1e05; border-top: 1px solid #85382a; color: #fff; }
.window-right .title { margin-left: -1px; }

.tabs { display: flex; flex: none; height: 26px; border-bottom: 1px solid #dcddde; }
.tab { width: 51px; height: 25px; line-height: 25px; }
.window-left .tab-file { width: 55px; height: 22px; background: #1979ca; color: #fff; line-height: 24px; }
.window-left .tab-on { height: 26px; border: 1px solid #dcddde; border-bottom: 0; background: #f5f6f7; }
.window-right .tabs { height: 27px; }
.window-right .tab { width: 52px; }
.window-right .tab-cropped { width: 44px; margin-left: -20px; text-align: center; }
.window-right .tab-cropped + .tab { margin-left: 5px; }

/* Ribbon */
.ribbon { --step: 21px; --loose: 24px; --gap: 1px; --pad: 3px; display: flex; flex: none; height: 105px; padding: 2px 0; background: #f5f6f7; border-bottom: 1px solid #dcddde; }
.window-right .ribbon { --step: 22px; --loose: 25px; --gap: 2px; --pad: 4px; height: 107px; }
.group { display: flex; flex-direction: column; flex: none; border-right: 1px solid #dcddde; }
.group h2 { margin-top: auto; font-size: 12px; line-height: 17px; text-align: center; color: #5a5a5a; }
.tools { display: flex; align-items: flex-start; gap: var(--gap); padding-left: var(--pad); }
.g-clip { width: 254px; }
.g-org { width: 182px; }
.g-new { width: 134px; }
.g-open { width: 123px; }
.g-select { width: 83px; }
.window-right .g-clip { width: 128px; }
.window-right .g-org { width: 187px; }
.window-right .g-new { width: 137px; }
.window-right .g-open { width: 127px; }
.window-right .g-select { width: 85px; }
.big { flex: none; display: block; width: 40px; padding-top: 7px; text-align: center; white-space: nowrap; }
.big .i28 { margin: 0 auto 4px; overflow: visible; }
.big .caret { margin: -1px auto 0; }
.big-pin { width: 58px; }
.big .pin-icon { padding: 4px; }
.caret { width: 6px; height: 4px; }
.off { color: #8c8c8c; }
.off .caret { color: #b0b0b0; }
.rule { width: 1px; height: 54px; margin: 13px 2px 0 4px; background: #dcddde; }
.small { display: flex; align-items: center; gap: 3px; height: var(--step); white-space: nowrap; }
.small .caret { margin-left: 1px; }
.stack { padding: 2px 0 0 3px; }
.stack-loose { padding-top: 3px; }
.stack-loose .small { height: var(--loose); }
.paste-col { width: 48px; }
.paste-col .cut { height: 22px; margin-left: 4px; }
.window-left .g-clip .stack { padding-left: 2px; }
.window-right .paste-col { width: 31px; margin-left: -19px; }
.window-right .g-clip .tools { padding-left: 0; }
.window-right .paste-col .cut { height: 24px; margin-left: 12px; }
.window-right .g-clip .stack { padding-left: 12px; }
.window-right .g-clip h2 { text-align: left; margin-left: -21px; }

/* Address row */
.address { display: flex; flex: none; align-items: center; height: 32px; }
.nav-arrows { width: 100px; height: 16px; margin-right: 3px; }
.crumbs { flex: 1; display: flex; align-items: center; height: 23px; border: 1px solid #d9d9d9; border-right: 0; padding-left: 2px; white-space: nowrap; }
.chev { width: 6px; height: 8px; margin: 0 9px; }
.window-left .crumbs .i16 { margin-right: -2px; }
.window-right .address { height: 33px; }
.window-right .crumbs { border-left: 0; padding-left: 0; }
.window-right .chev { margin: 0 10px; }
.window-right .chev:first-child { margin-left: 0; margin-right: 9px; }

/* Body */
.content { flex: 1; display: flex; min-height: 0; }
.window-left .content { padding-top: 2px; }
.window-right .content { padding-top: 3px; }
.treebox { width: 148px; overflow: hidden; }
.tree { display: grid; grid-auto-rows: 1fr; height: 584px; margin-bottom: -40px; }
.tree li { display: flex; align-items: center; gap: 4px; padding-left: 31px; white-space: nowrap; }
.tree .l1 { padding-left: 39px; }
.tree .l2 { padding-left: 47px; }
.tree .l3 { padding-left: 55px; }
.tree .l4 { padding-left: 63px; }
.tree .on { background: #d9d9d9; }
.scroll { flex: none; display: flex; flex-direction: column; align-items: center; width: 16px; background: #f0f0f0; margin-right: 2px; }
.arrow { width: 10px; height: 6px; margin: 6px 0; }
.thumb { width: 100%; background: #cdcdcd; }
.scroll-left { margin-left: 1px; }
.scroll-left .gap-before { flex: 124; }
.scroll-left .thumb { flex: 166; }
.scroll-left .gap-after { flex: 255; }
.scroll-right .thumb { flex: 1; }
.scroll-right .gap-after { flex: 0 0 7px; }
.scroll-right { margin-bottom: 9px; }

.listing { flex: 1; min-width: 0; border-left: 1px solid #f0f0f0; }
.files { table-layout: fixed; border-collapse: collapse; color: #6d6d6d; white-space: nowrap; }
.files th { height: 27px; padding: 0 0 0 6px; font-weight: 400; text-align: left; color: #4c607a; border-right: 1px solid #e2e3e4; }
.files thead::after { content: ""; display: block; height: 6px; }
.files th:first-child { padding-left: 3px; }
.files td { height: 20px; padding: 0 0 0 6px; }
.files td:first-child { padding-left: 3px; color: #000; }
.files td:last-child { padding-right: 8px; text-align: right; }
.files td .i16 { display: inline-block; margin-right: 4px; vertical-align: middle; }
.files .on td { background: #e5f3ff; }
.files .on td:last-child { background: linear-gradient(#e5f3ff, #e5f3ff) no-repeat 0 0 / calc(100% - 4px) 100%; }
.window-left .files { width: 562px; height: 339px; margin-left: 14px; }
.window-left .c-name { width: 250px; }
.window-left .c-date, .window-left .c-type { width: 117px; }
.window-left .c-size { width: 78px; }
.window-right .files { width: 578px; margin-left: 15px; }
.window-right .files td { height: 21px; }
.window-right .files td:first-child { padding-left: 4px; }
.window-right .c-name { width: 258px; }
.window-right .c-date, .window-right .c-type { width: 120px; }
.window-right .c-size { width: 80px; }

.status { display: flex; align-items: center; flex: none; height: 22px; padding-left: 14px; color: #1e395b; }
.status span { padding-right: 11px; border-right: 1px solid #f0f0f0; }

.quick {
  width: 20px; padding-top: 40px; overflow: hidden; display: flex; flex-direction: column; margin: 0;
  background: linear-gradient(#a8f4ff, #a8f4ff) no-repeat 0 100px / 1px 5px, linear-gradient(#a8f4ff, #a8f4ff) no-repeat 0 307px / 1px 5px;
}
.quick li { flex: none; display: flex; align-items: center; height: 24px; padding-left: 6px; }
.quick .pin { width: 10px; height: 10px; }
.quick .quick-text { padding: 0; width: 19px; overflow: hidden; }
.quick .quick-on { margin-top: 328px; width: 19px; background: #d9d9d9; }

.details { flex: none; width: 101px; overflow: hidden; padding: 7px 0 0 24px; border-left: 1px solid #f0f0f0; margin-bottom: 9px; color: #1e395b; white-space: nowrap; }
.details h1 { font-size: 16px; line-height: 22px; }
.bigfolder { width: 60px; height: 84px; margin: 39px 0 9px 16px; }
.details .dim { margin-right: 11px; color: #5a6a7c; }

/* Red annotations drawn over the windows */
.mark-box { position: absolute; border: 3px solid #fb3636; }
.mark-left { left: 263px; top: 158px; width: 313px; height: 37px; }
.mark-right { left: 129px; top: 163px; width: 264px; height: 42px; }
.mark-sort { position: absolute; width: 10px; height: 6px; }
.sort-left { left: 301px; top: 194px; }
.mark-arrow { position: absolute; left: 398px; top: 198px; width: 20px; height: 352px; }
.note { position: absolute; color: #ff3030; font-family: "Noto Serif CJK SC", "Noto Sans CJK SC", serif; font-weight: 300; white-space: nowrap; }
.note-left { left: 251px; top: 561px; font-size: 20px; line-height: 28px; }
.note-right { left: 472px; top: 175px; font-size: 21px; line-height: 28px; }
```
